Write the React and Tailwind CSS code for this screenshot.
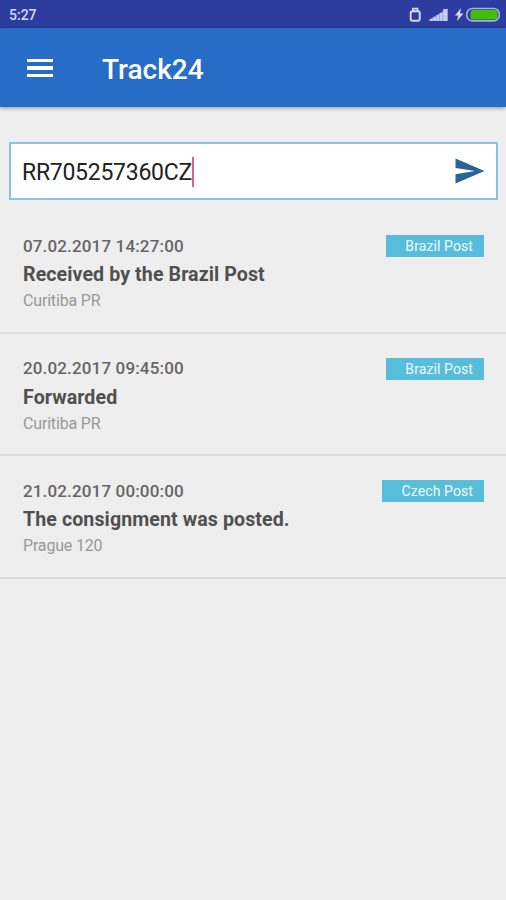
import React, { useState } from "react";

const events = [
  {
    id: 1,
    date: "07.02.2017 14:27:00",
    title: "Received by the Brazil Post",
    place: "Curitiba PR",
    carrier: "Brazil Post",
  },
  {
    id: 2,
    date: "20.02.2017 09:45:00",
    title: "Forwarded",
    place: "Curitiba PR",
    carrier: "Brazil Post",
  },
  {
    id: 3,
    date: "21.02.2017 00:00:00",
    title: "The consignment was posted.",
    place: "Prague 120",
    carrier: "Czech Post",
  },
];

function StatusBar() {
  return (
    <div className="flex h-7 items-center justify-between bg-[#2c3d9f] pl-[9px] pr-[6px] pt-px text-[#d5dcf7]">
      <span className="text-[14px] font-medium leading-none">5:27</span>
      <svg width="92" height="16" viewBox="0 0 92 16" fill="none">
        {/* lock */}
        <path d="M4.900 4V1.600h4.600V4" stroke="#d5dcf7" strokeWidth="1.600" />
        <rect x="2.700" y="4.300" width="9" height="9.400" rx="1.800" stroke="#d5dcf7" strokeWidth="1.900" />
        {/* signal */}
        <path d="M21 14v-1.200L39.500 1.500V14z" fill="#8f9bd6" />
        <g fill="#c5cef2">
          <rect x="22" y="12" width="2.600" height="2" />
          <rect x="25.300" y="10.100" width="2.600" height="3.900" />
          <rect x="28.600" y="8.100" width="2.600" height="5.900" />
          <rect x="31.900" y="6" width="2.600" height="8" />
          <rect x="35.200" y="2" width="4.300" height="12" />
        </g>
        {/* battery */}
        <path d="M53 1l-6 7.500h3.300L49 14l6.500-7.500h-3.600z" fill="#d5dcf7" />
        <rect x="58.800" y="1.500" width="32.400" height="12.400" rx="5.500" stroke="#a3b4cf" strokeWidth="1.600" />
        <rect x="62.500" y="3" width="27" height="9.400" rx="2.500" fill="#45bd0c" />
      </svg>
    </div>
  );
}

function Toolbar() {
  return (
    <header className="flex h-[79px] items-center bg-[#276cc7] pl-[27px] pt-px text-white shadow-[0_1px_4px_rgba(0,0,0,0.4)]">
      <button aria-label="Menu" className="flex w-[26px] flex-col gap-1">
        <span className="h-[3.600px] bg-white" />
        <span className="h-[3.600px] bg-white" />
        <span className="h-[3.600px] bg-white" />
      </button>
      <h1 className="ml-[49px] pt-[3px] text-[28px] font-medium leading-none">Track24</h1>
    </header>
  );
}

function SearchBox({ value, onSend }) {
  return (
    <div className="ml-[9px] mr-2 mt-[35px] flex h-[58px] items-center justify-between border-2 border-[#8dc2da] bg-white pl-[11px] pr-[11px]">
      <div className="flex items-center pt-0.5">
        <span className="text-[23px] leading-none tracking-[-0.270px] text-[#222]">{value}</span>
        <span className="h-[30px] w-[2.500px] bg-[#e0608a]" />
      </div>
      <button onClick={onSend} aria-label="Track">
        <svg width="30" height="26" viewBox="0 0 30 26" fill="#2a6299">
          <path d="M0.500 0.500L29.500 13L0.500 25.500V16.200L20 13L0.500 10z" />
        </svg>
      </button>
    </div>
  );
}

function EventRow({ event }) {
  return (
    <li className="h-[122.500px] border-b-2 border-[#dcdcdc] pl-[23px] pr-[22px] pt-[24px]">
      <div className="flex h-[22px] items-center justify-between">
        <span className="text-[17px] font-medium leading-none tracking-[0.150px] text-[#666]">{event.date}</span>
        <span className="flex h-[22px] items-center bg-[#58bddb] pb-px pl-[19.500px] pr-[11px] pt-0.5 text-[14px] tracking-[0.100px] text-[#eefaff]">
          {event.carrier}
        </span>
      </div>
      <h2 className="mt-[5px] text-[19.600px] font-bold leading-[26px] tracking-[0.090px] text-[#505050]">{event.title}</h2>
      <p className="mt-px text-[16px] leading-6 tracking-[-0.170px] text-[#999]">{event.place}</p>
    </li>
  );
}

function App() {
  const [code] = useState("RR705257360CZ");
  const [list, setList] = useState(events);

  const handleSend = () => {
    setList([...events]);
  };

  return (
    <div className="h-[900px] w-[506px] overflow-hidden bg-[#eeeeee] font-['Roboto',sans-serif]">
      <StatusBar />
      <Toolbar />
      <SearchBox value={code} onSend={handleSend} />
      <ul className="mt-[11px]">
        {list.map((event) => (
          <EventRow key={event.id} event={event} />
        ))}
      </ul>
    </div>
  );
}

export default App;
